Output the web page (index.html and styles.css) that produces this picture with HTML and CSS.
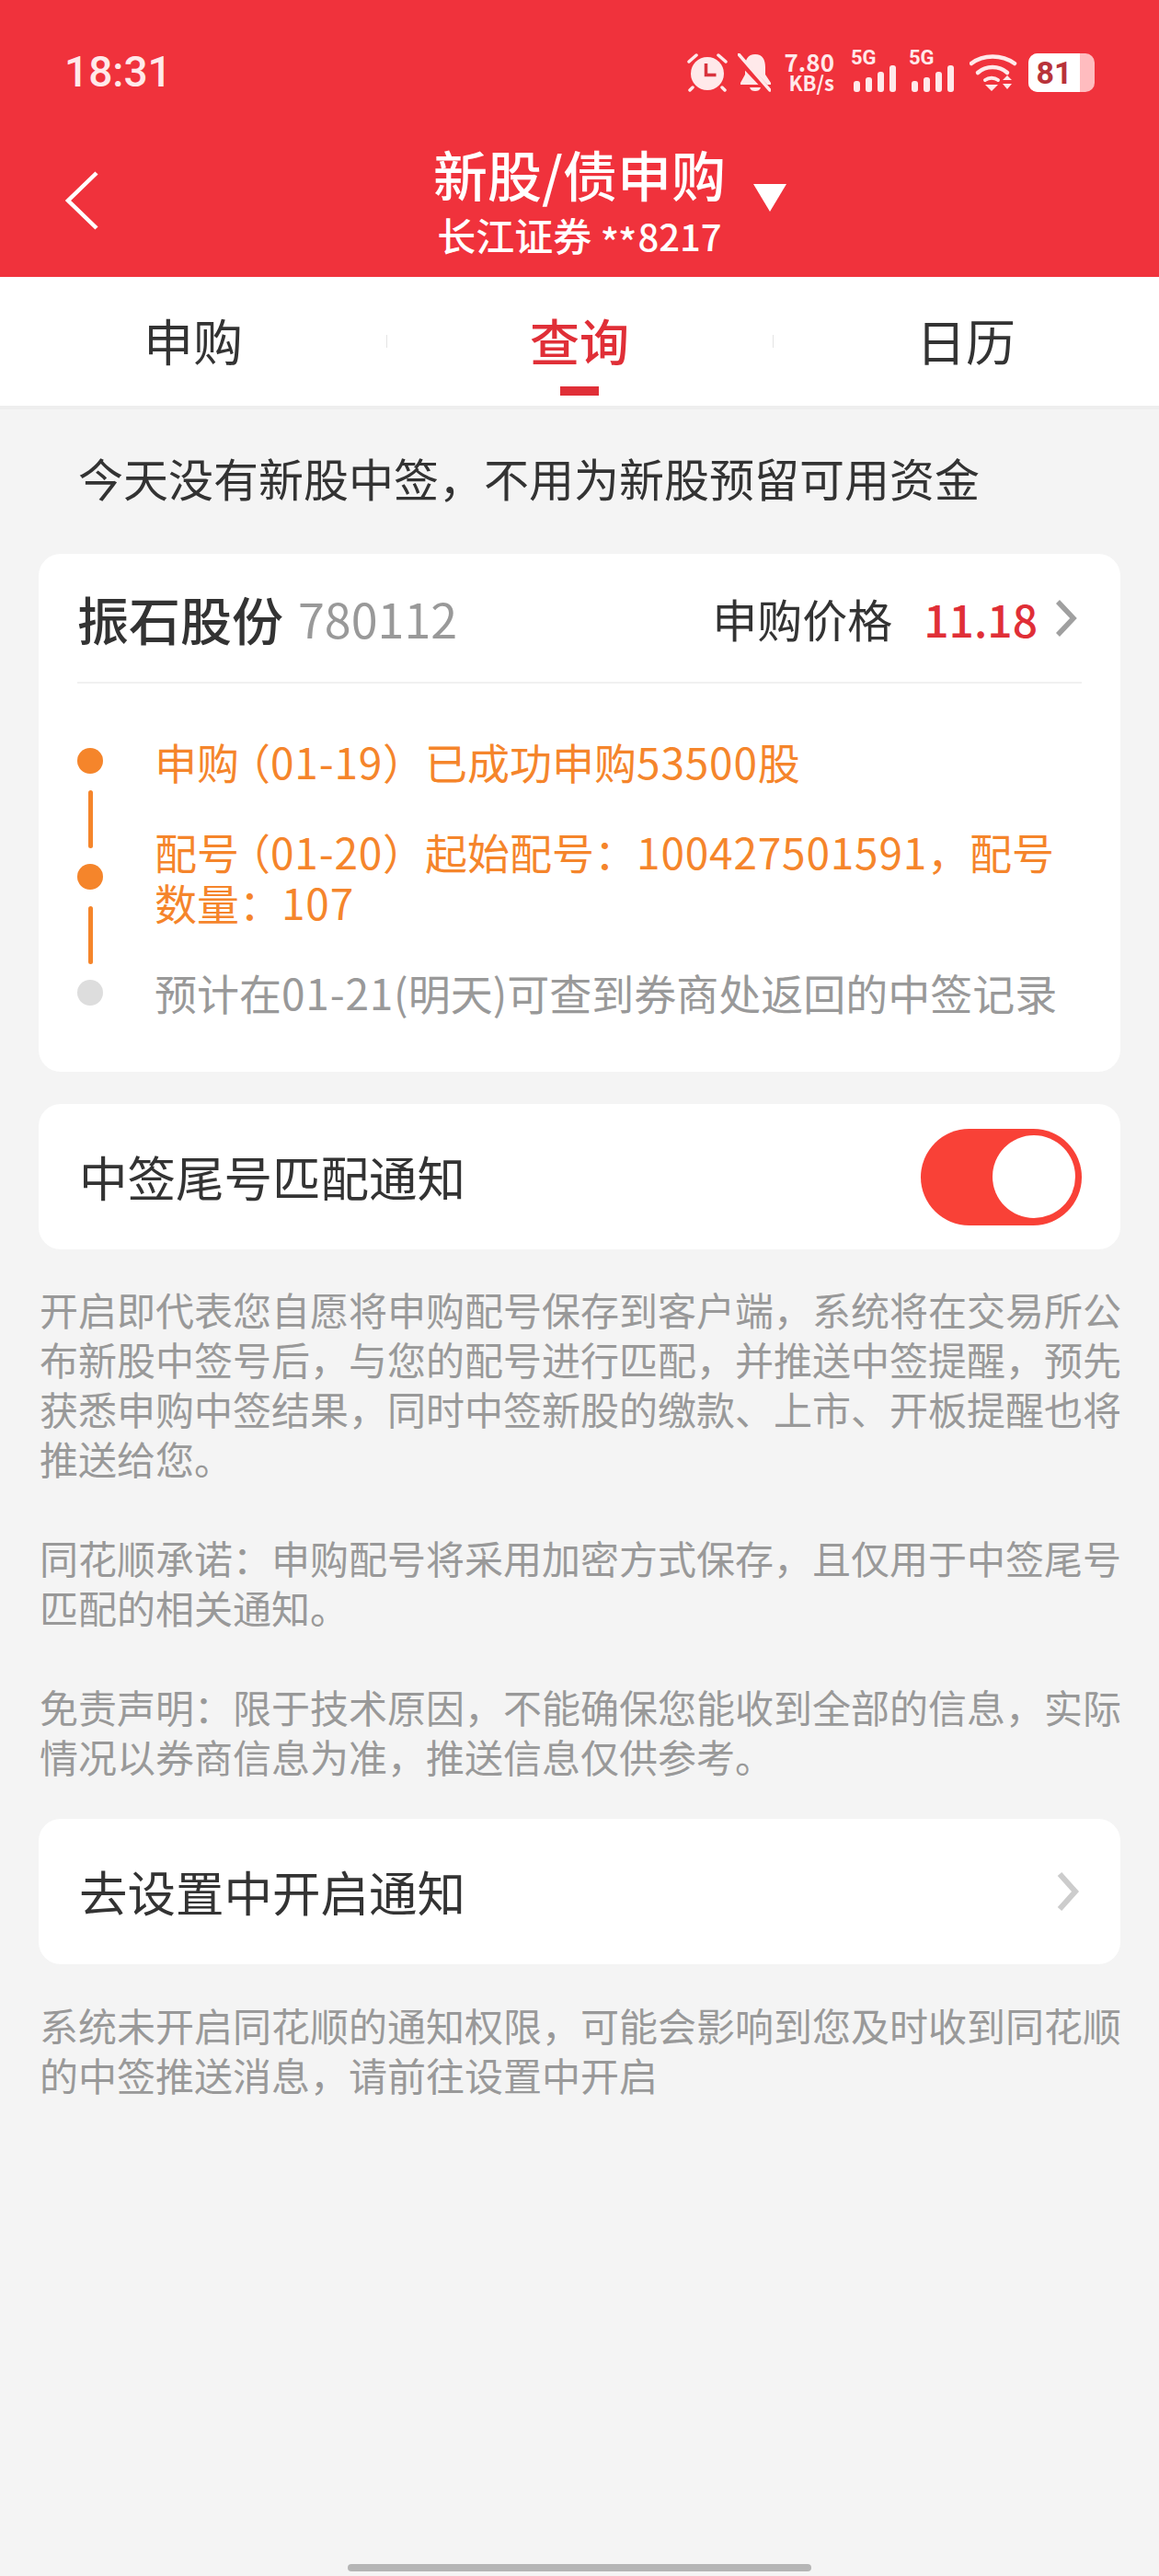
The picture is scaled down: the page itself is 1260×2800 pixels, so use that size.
FILE: index.html
```html
<!DOCTYPE html>
<html lang="zh-CN">
    <head>
        <meta charset="UTF-8">
        <meta name="viewport" content="width=device-width, initial-scale=1.0">
        <title>新股/债申购</title>
        <link rel="stylesheet" href="styles.css">
    </head>
    <body>
        <div class="header">
            <div class="status">
                <span class="clock">18:31</span>
                <div class="status-icons">
                    <svg class="ic-alarm" width="44" height="42" viewBox="0 0 44 42">
                        <circle cx="22" cy="22" r="18" fill="#ffe9ea"/>
                        <path d="M20.500 11v12.500h11" fill="none" stroke="#d8323c" stroke-width="3.500"/>
                        <path d="M2 9l8-7M42 9l-8-7M6 37l-3 3M38 37l3 3" stroke="#ffe9ea" stroke-width="3.500" fill="none" stroke-linecap="round"/>
                    </svg>
                    <svg class="ic-bell" width="36" height="42" viewBox="0 0 36 42">
                        <path d="M19 1c8 0 11 6 11 14v8l6 9v2H3v-2l5-9v-8C8 7 11 1 19 1z" fill="#ffe9ea"/>
                        <path d="M13 37h12c-1 3-3 4-6 4s-5-1-6-4z" fill="#ffe9ea"/>
                        <path d="M-2 3l36 38" stroke="#f0323c" stroke-width="7"/>
                        <path d="M1 1l34 39" stroke="#ffe9ea" stroke-width="3.500" stroke-linecap="round"/>
                    </svg>
                    <div class="speed"><span>7.80</span><span class="unit">KB/s</span></div>
                    <div class="signal">
                        <span class="net">5G</span>
                        <svg width="47" height="29" viewBox="0 0 47 29">
                            <rect x="0" y="17" width="7" height="12" rx="3"/>
                            <rect x="13" y="13" width="7" height="16" rx="3"/>
                            <rect x="26" y="7" width="7" height="22" rx="3"/>
                            <rect x="39" y="0" width="7" height="29" rx="3"/>
                        </svg>
                    </div>
                    <div class="signal">
                        <span class="net">5G</span>
                        <svg width="47" height="29" viewBox="0 0 47 29">
                            <rect x="0" y="17" width="7" height="12" rx="3"/>
                            <rect x="13" y="13" width="7" height="16" rx="3"/>
                            <rect x="26" y="7" width="7" height="22" rx="3"/>
                            <rect x="39" y="0" width="7" height="29" rx="3"/>
                        </svg>
                    </div>
                    <svg class="ic-wifi" width="52" height="42" viewBox="0 0 52 42">
                        <path d="M2 11C15 1 35 1 49 11" fill="none" stroke="#ffe9ea" stroke-width="4.500" stroke-linecap="round"/>
                        <path d="M9 21C18 13 32 13 41 21" fill="none" stroke="#ffe9ea" stroke-width="4.500" stroke-linecap="round"/>
                        <path d="M17 29c4-3 10-3 14 0" fill="none" stroke="#ffe9ea" stroke-width="4" stroke-linecap="round"/>
                        <path d="M17 34h14l-7 7zM36 29l5-5 5 5zM36 33h10l-5 6z" fill="#ffe9ea"/>
                    </svg>
                    <div class="battery"><span class="level">81</span></div>
                </div>
            </div>
            <div class="nav">
                <svg class="back" width="38" height="64" viewBox="0 0 38 64">
                    <path d="M35 2L4 32l31 30" fill="none" stroke="#fff" stroke-width="4.500"/>
                </svg>
                <div class="nav-title">
                    <div class="title">新股/债申购</div>
                    <div class="account">长江证券 <span class="mask">**</span><span class="acc-no">8217</span></div>
                </div>
                <span class="caret"></span>
            </div>
        </div>

        <div class="tabs">
            <div class="tab">申购</div>
            <div class="tab active">查询</div>
            <div class="tab">日历</div>
        </div>

        <div class="notice">今天没有新股中签，不用为新股预留可用资金</div>

        <div class="card stock">
            <div class="stock-head">
                <span class="stock-name">振石股份</span>
                <span class="stock-code">780112</span>
                <span class="price-label">申购价格</span>
                <span class="price">11.18</span>
                <svg class="arrow" width="26" height="42" viewBox="0 0 26 42">
                    <path d="M4 3l17 18L4 39" fill="none" stroke="#a0a0a0" stroke-width="5.500"/>
                </svg>
            </div>
            <div class="timeline">
                <div class="rail">
                    <span class="dot"></span>
                    <span class="bar"></span>
                    <span class="dot"></span>
                    <span class="bar"></span>
                    <span class="dot off"></span>
                </div>
                <div class="steps">
                    <div class="step">申购<span class="lp">（</span><span class="num">01-19</span>）已成功申购<span class="num">53500</span>股</div>
                    <div class="step">配号<span class="lp">（</span><span class="num">01-20</span>）起始配号：<span class="num">100427501591</span>，配号<br>数量：<span class="num">107</span></div>
                    <div class="step off">预计在<span class="num">01-21</span>(明天)可查到券商处返回的中签记录</div>
                </div>
            </div>
        </div>

        <div class="card row first">
            <span class="row-label">中签尾号匹配通知</span>
            <div class="switch"><span class="knob"></span></div>
        </div>

        <div class="desc">
            <p>开启即代表您自愿将申购配号保存到客户端，系统将在交易所公布新股中签号后，与您的配号进行匹配，并推送中签提醒，预先获悉申购中签结果，同时中签新股的缴款、上市、开板提醒也将推送给您。</p>
            <p>同花顺承诺：申购配号将采用加密方式保存，且仅用于中签尾号匹配的相关通知。</p>
            <p>免责声明：限于技术原因，不能确保您能收到全部的信息，实际情况以券商信息为准，推送信息仅供参考。</p>
        </div>

        <div class="card row">
            <span class="row-label">去设置中开启通知</span>
            <svg class="arrow wide" width="28" height="44" viewBox="0 0 28 44">
                <path d="M5 3l17 19L5 41" fill="none" stroke="#cccccc" stroke-width="6"/>
            </svg>
        </div>

        <div class="desc last">
            <p>系统未开启同花顺的通知权限，可能会影响到您及时收到同花顺的中签推送消息，请前往设置中开启</p>
        </div>

        <div class="home-bar"></div>
    </body>
</html>
```

FILE: styles.css
```css
:root {
    --red: #f0323c;
    --orange: #f5852b;
    --page: #f4f4f4;
    --ink: #333333;
    --gray: #999999;
}
* {
    box-sizing: border-box;
    font-family: "Noto Sans CJK SC", "Noto Sans", sans-serif;
}
html, body {
    margin: 0px;
}
body {
    display: flex;
    flex-direction: column;
    width: 1260px;
    height: 2800px;
    background: var(--page);
    color: var(--ink);
    overflow: hidden;
}

/* #region Header */
.header {
    height: 301px;
    background: var(--red);
    color: #fff;
}
.status {
    display: flex;
    justify-content: space-between;
    align-items: center;
    height: 130px;
    padding: 24px 70px 0px 70px;
}
.clock {
    padding-top: 2px;
    font-family: "Roboto", sans-serif;
    font-size: 46px;
    font-weight: 500;
    color: #ffe9ea;
}
.status-icons {
    display: flex;
    align-items: flex-end;
    height: 46px;
    color: #ffe9ea;
}
.ic-alarm { margin-right: 11px; }
.ic-bell { margin-right: 19px; }
.speed {
    display: flex;
    flex-direction: column;
    align-items: flex-end;
    width: 50px;
    margin-right: 21px;
    font-family: "Roboto", sans-serif;
    font-size: 26px;
    font-weight: 700;
    line-height: 24px;
}
.speed .unit { font-size: 22px; line-height: 21px; white-space: nowrap; }
.signal {
    display: flex;
    flex-direction: column;
    width: 47px;
    margin-right: 16px;
}
.signal .net {
    font-family: "Roboto", sans-serif;
    font-size: 22px;
    font-weight: 700;
    line-height: 17px;
    margin-left: -3px;
}
.signal svg { fill: #ffe9ea; display: block; }
.ic-wifi { margin: 0px 12px 0px 0px; }
.battery {
    display: flex;
    align-items: center;
    width: 72px;
    height: 42px;
    border-radius: 10px;
    overflow: hidden;
    background: #ffbcbf;
}
.battery .level {
    width: 56px;
    height: 100%;
    background: #fff;
    color: #b8323a;
    font-family: "Roboto", sans-serif;
    font-size: 34px;
    font-weight: 700;
    line-height: 42px;
    text-align: center;
}
.nav {
    display: flex;
    align-items: flex-start;
    position: relative;
    justify-content: center;
    height: 171px;
    padding-top: 23px;
}
.back {
    position: absolute;
    left: 70px;
    top: 56px;
}
.title {
    font-size: 59px;
    font-weight: 500;
    line-height: 72px;
    text-align: center;
}
.account {
    margin-top: 3px;
    font-size: 42px;
    font-weight: 500;
    line-height: 54px;
    text-align: center;
}
.mask {
    vertical-align: -7px;
    letter-spacing: -1px;
}
.acc-no {
    font-size: 40px;
    margin-left: 2px;
}
.caret {
    position: absolute;
    left: 819px;
    top: 70px;
    border-left: 18px solid transparent;
    border-right: 18px solid transparent;
    border-top: 30px solid #fff;
}
/* #endregion Header */

/* #region Tabs */
.tabs {
    display: flex;
    height: 144px;
    background: #fff;
    border-bottom: 4px solid #eeeeee;
}
.tab {
    flex: 1;
    position: relative;
    padding-top: 30px;
    font-size: 54px;
    line-height: 78px;
    text-align: center;
}
.tab + .tab::before {
    content: "";
    position: absolute;
    left: 0px;
    top: 63px;
    width: 1px;
    height: 14px;
    background: #e4e4e4;
}
.tab.active {
    color: #e02f37;
    font-weight: 500;
}
.tab.active::after {
    content: "";
    position: absolute;
    left: 50%;
    top: 119px;
    width: 42px;
    height: 10px;
    margin-left: -21px;
    background: #e02f37;
}
/* #endregion Tabs */

.notice {
    padding: 39px 0px 0px 85px;
    height: 157px;
    font-size: 49px;
    line-height: 70px;
}

.card {
    margin: 0px 42px;
    background: #fff;
    border-radius: 24px;
}
.stock {
    height: 563px;
    padding: 0px 42px;
}
.stock-head {
    display: flex;
    align-items: center;
    height: 141px;
    border-bottom: 2px solid #f1f1f1;
}
.stock-name {
    font-size: 56px;
    font-weight: 500;
}
.stock-code {
    margin-left: 16px;
    color: var(--gray);
    font-size: 52px;
}
.price-label {
    margin-left: auto;
    font-size: 49px;
}
.price {
    margin: 0px 18px 0px 34px;
    color: #e02f37;
    font-size: 48px;
    font-weight: 500;
}
.arrow {
    margin-right: 4px;
}
.arrow.wide {
    margin-right: 1px;
}

.timeline {
    display: flex;
    padding-top: 57px;
}
.rail {
    display: flex;
    flex-direction: column;
    align-items: center;
    width: 28px;
    padding-top: 13px;
    margin-right: 56px;
}
.dot {
    width: 28px;
    height: 28px;
    border-radius: 50%;
    background: var(--orange);
}
.dot.off { background: #dddddd; }
.bar {
    width: 5px;
    height: 63px;
    margin: 18px 0px 17px 0px;
    border-radius: 3px;
    background: var(--orange);
}
.steps {
    display: flex;
    flex-direction: column;
    gap: 43px;
    font-size: 46px;
    line-height: 55px;
    color: var(--orange);
}
.step.off { color: var(--gray); }
/* half width left paren, the app draws it tighter than the right one */
.lp {
    margin-left: 11px;
    font-feature-settings: "halt";
}
.num { letter-spacing: 0.800px; }

.row {
    display: flex;
    justify-content: space-between;
    align-items: center;
    height: 158px;
    margin-top: 41px;
    padding: 0px 42px 0px 44px;
    font-size: 52.500px;
}
.row-label {
    padding-bottom: 2px;
}
.row.first {
    margin-top: 35px;
}
.switch {
    display: flex;
    justify-content: flex-end;
    align-items: center;
    width: 175px;
    height: 105px;
    padding-right: 7px;
    border-radius: 53px;
    background: #f94137;
}
.knob {
    width: 90px;
    height: 90px;
    border-radius: 50%;
    background: #fff;
}

.desc {
    padding: 38px 41px 0px 43px;
    color: #999999;
    font-size: 42px;
    line-height: 54px;
}
.desc.last {
    padding-top: 39px;
}
.desc p {
    margin: 0px 0px 54px 0px;
}
.desc p:last-child {
    margin-bottom: 0px;
}

.home-bar {
    width: 504px;
    height: 8px;
    margin: auto auto 5px auto;
    border-radius: 4px;
    background: #b5b5b5;
}
```
